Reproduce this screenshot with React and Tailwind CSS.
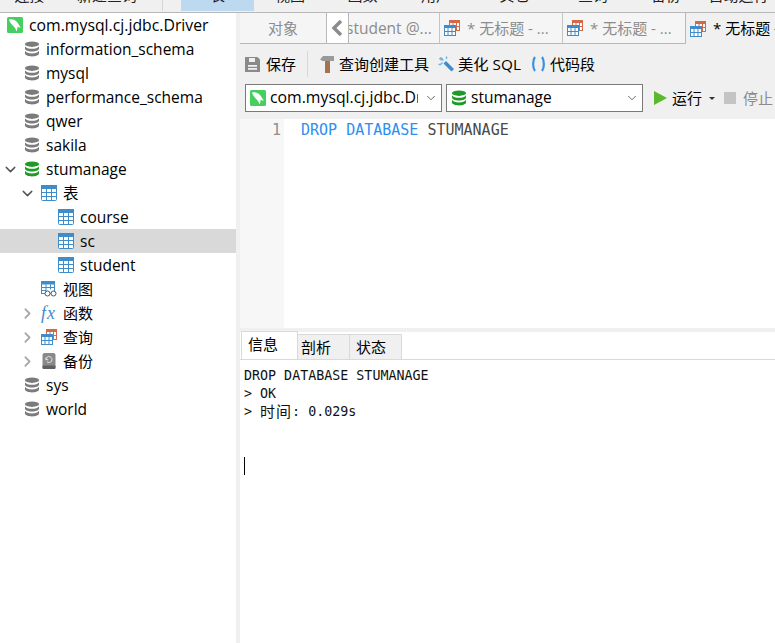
import { ChevronDown, ChevronRight } from 'lucide-react';

const uiFont = 'font-["Open_Sans","Noto_Sans_CJK_SC",sans-serif]';
const monoFont = 'font-["DejaVu_Sans_Mono","Noto_Sans_CJK_SC",monospace]';

const menuItems = [
    { label: '连接', width: 'w-[59px]' },
    { label: '新建查询', width: 'w-[96px]' },
    { label: '', width: 'w-[8px] border-r border-[#d4d4d4]' },
    { label: '', width: 'w-[18px]' },
    { label: '表', width: 'w-[73px] bg-[#bcd9f0]' },
    { label: '视图', width: 'w-[72px]' },
    { label: '函数', width: 'w-[73px]' },
    { label: '用户', width: 'w-[74px]' },
    { label: '其它', width: 'w-[83px]' },
    { label: '查询', width: 'w-[74px]' },
    { label: '备份', width: 'w-[72px]' },
    { label: '自动运行', width: 'w-[73px]' },
];

const DbIcon = ({ color = '#7b7b7b', size = 16 }) => (
    <svg width={size} height={size} viewBox="0 0 16 16" className="shrink-0">
        <ellipse cx="8" cy="3.2" rx="7" ry="2.7" fill={color} />
        <path d="M1 5.2c1 1.800 3.800 2.600 7 2.600s6-.8 7-2.600v2.600c0 1.600-3.100 2.700-7 2.700s-7-1.100-7-2.700z" fill={color} />
        <path d="M1 9.800c1 1.800 3.800 2.600 7 2.600s6-.8 7-2.600v2.800c0 1.600-3.100 2.900-7 2.900s-7-1.300-7-2.900z" fill={color} />
    </svg>
);

const Dolphin = () => (
    <svg width="16" height="16" viewBox="0 0 16 16" className="shrink-0">
        <rect width="16" height="16" rx="1.500" fill="#45cf5f" />
        <path d="M2 2.500c3-.8 6 .2 8 2.500 1.400 1.600 2 3.500 3.800 5.500-1.500.2-2.500-.3-3.300-1 .2 1.500-.2 3.500-1 5-.4-1.500-1-3-2.300-4.500C5.500 8.300 3 6 2 2.500z" fill="#fff" />
    </svg>
);

const TableIcon = ({ size = 16 }) => (
    <svg width={size} height={size} viewBox="0 0 16 16" className="shrink-0">
        <rect x="0.500" y="0.500" width="15" height="15" rx="1" fill="#fff" stroke="#3f8ccb" />
        <rect x="0" y="0" width="16" height="4" fill="#3f8ccb" />
        <path d="M5.500 4v11M10.500 4v11M1 7.500h14M1 11.500h14" stroke="#3f8ccb" strokeWidth="1" fill="none" />
    </svg>
);

const ViewIcon = () => (
    <svg width="16" height="16" viewBox="0 0 16 16" className="shrink-0">
        <rect x="0.500" y="0.500" width="13" height="12" fill="#fff" stroke="#3f8ccb" />
        <rect x="0" y="0" width="14" height="3.500" fill="#3f8ccb" />
        <path d="M5 3.500v9M9.500 3.500v5M1 6.500h12M1 9.500h4" stroke="#3f8ccb" fill="none" />
        <circle cx="6.500" cy="12.500" r="2.500" fill="#fff" stroke="#555" />
        <circle cx="12.500" cy="12.500" r="2.500" fill="#fff" stroke="#555" />
    </svg>
);

const QueryIcon = () => (
    <svg width="16" height="16" viewBox="0 0 16 16" className="shrink-0">
        <rect x="5.500" y="0.500" width="10" height="10" fill="#fff" stroke="#d4694a" />
        <rect x="5" y="0" width="11" height="3" fill="#d4694a" />
        <path d="M9 3v8M12.500 3v8M5 6.500h11" stroke="#d4694a" fill="none" />
        <rect x="0.500" y="5.500" width="11" height="10" fill="#fff" stroke="#3f8ccb" />
        <rect x="0" y="5" width="12" height="3" fill="#3f8ccb" />
        <path d="M4 8v8M8 8v8M0 11.500h12" stroke="#3f8ccb" fill="none" />
    </svg>
);

const BackupIcon = () => (
    <svg width="16" height="16" viewBox="0 0 16 16" className="shrink-0">
        <rect x="1.500" y="0" width="13" height="16" rx="2" fill="#8a8a8a" />
        <rect x="1.500" y="12.500" width="13" height="3.500" rx="1" fill="#5f5f5f" />
        <path d="M5 6.500a3 3 0 1 1 1 2.300M5 4.500v2.200h2.200" stroke="#e6e6e6" strokeWidth="1" fill="none" />
    </svg>
);

const FxIcon = () => (
    <span className='flex w-4 shrink-0 items-center font-["Liberation_Serif",serif] text-[18px] leading-none tracking-[1px] whitespace-nowrap text-[#3f8ccb] italic'>
        fx
    </span>
);

const SaveIcon = () => (
    <svg width="16" height="16" viewBox="0 0 16 16" className="shrink-0">
        <path d="M0 1h12.500L15 3.500V16H0z" fill="#8a8a8a" />
        <rect x="4" y="2" width="6" height="4" fill="#f0f0f0" />
        <rect x="3" y="9" width="9" height="1.800" fill="#f0f0f0" />
        <rect x="3" y="12" width="9" height="1.800" fill="#f0f0f0" />
    </svg>
);

const HammerIcon = () => (
    <svg width="14" height="17" viewBox="0 0 14 17" className="shrink-0">
        <path d="M0 3.500 3 0h11v5H2.500z" fill="#999" />
        <rect x="5" y="5" width="5" height="12" fill="#a5714f" />
    </svg>
);

const WandIcon = () => (
    <svg width="16" height="16" viewBox="0 0 16 16" className="shrink-0">
        <path d="m5.500 7.500 2.500-2.500 8 8-2.500 2.500z" fill="#3f8ccb" />
        <path d="M3 1v3.500M1.200 2.700h3.600M8.500 .5v2.500M.5 8.500h2.500M5.500 4.500 4 3M4.500 6.500 2.500 8.500" stroke="#6fb3e3" strokeWidth="1.400" fill="none" />
    </svg>
);

const BracesIcon = () => (
    <svg width="15" height="16" viewBox="0 0 15 16" className="shrink-0">
        <path d="M4 1C1.500 4 1.500 12 4 15M11 1c2.500 3 2.500 11 0 14" stroke="#3a8fe0" strokeWidth="2.200" fill="none" />
    </svg>
);

const PlayIcon = () => (
    <svg width="13" height="14" viewBox="0 0 13 14" className="shrink-0">
        <path d="M0 0 13 7 0 14z" fill="#5cb82c" />
    </svg>
);

const TreeRow = ({ indent, chevron, icon, label, selected, size = 'text-[15.5px]' }) => (
    <div className={`flex h-6 items-center ${indent} ${selected ? 'bg-[#d9d9d9]' : ''}`}>
        {chevron === 'open' && <ChevronDown size={17} strokeWidth={2} className="mr-[5px] -ml-[3px] shrink-0 text-[#555]" />}
        {chevron === 'closed' && <ChevronRight size={17} strokeWidth={2.5} className="mr-[5px] -ml-[3px] shrink-0 text-[#aaa]" />}
        {icon}
        <span className={`ml-[6px] leading-[24px] whitespace-nowrap text-black ${size}`}>{label}</span>
    </div>
);

const DocTab = ({ label }) => (
    <div className="flex h-full w-[123px] shrink-0 items-center gap-[7px] overflow-hidden border-l border-[#c4c4c4] pl-[4px]">
        <QueryIcon />
        <span className="text-[15px] whitespace-nowrap text-[#8c8c8c]">{label}</span>
    </div>
);

const App = () => {
    return (
        <div className={`flex h-[643px] w-[775px] flex-col overflow-hidden bg-white ${uiFont}`}>
            {/* menu strip, mostly scrolled out of the window */}
            <div className="flex h-[13px] shrink-0 overflow-hidden border-b border-[#b8b8b8] bg-[#f0f0f0]">
                {menuItems.map((item, i) => (
                    <div key={i} className={`flex h-[11px] shrink-0 items-start justify-center overflow-hidden ${item.width}`}>
                        <span className="-mt-[15px] text-[15px] leading-5 whitespace-nowrap text-[#222]">{item.label}</span>
                    </div>
                ))}
            </div>

            <div className="flex min-h-0 flex-1">
                {/* connection tree */}
                <div className="w-[236px] shrink-0 bg-white">
                    <TreeRow indent="pl-[7px]" size="text-[15.8px]" icon={<Dolphin />} label="com.mysql.cj.jdbc.Driver" />
                    <TreeRow indent="pl-[24px]" icon={<DbIcon />} label="information_schema" />
                    <TreeRow indent="pl-[24px]" icon={<DbIcon />} label="mysql" />
                    <TreeRow indent="pl-[24px]" icon={<DbIcon />} label="performance_schema" />
                    <TreeRow indent="pl-[24px]" icon={<DbIcon />} label="qwer" />
                    <TreeRow indent="pl-[24px]" icon={<DbIcon />} label="sakila" />
                    <TreeRow indent="pl-[5px]" chevron="open" icon={<DbIcon color="#1f9a28" />} label="stumanage" />
                    <TreeRow indent="pl-[22px]" chevron="open" icon={<TableIcon />} label="表" />
                    <TreeRow indent="pl-[58px]" icon={<TableIcon />} label="course" />
                    <TreeRow indent="pl-[58px]" selected icon={<TableIcon />} label="sc" />
                    <TreeRow indent="pl-[58px]" icon={<TableIcon />} label="student" />
                    <TreeRow indent="pl-[41px]" size="text-[15px]" icon={<ViewIcon />} label="视图" />
                    <TreeRow indent="pl-[22px]" size="text-[15px]" chevron="closed" icon={<FxIcon />} label="函数" />
                    <TreeRow indent="pl-[22px]" size="text-[15px]" chevron="closed" icon={<QueryIcon />} label="查询" />
                    <TreeRow indent="pl-[22px]" size="text-[15px]" chevron="closed" icon={<BackupIcon />} label="备份" />
                    <TreeRow indent="pl-[24px]" icon={<DbIcon />} label="sys" />
                    <TreeRow indent="pl-[24px]" icon={<DbIcon />} label="world" />
                </div>

                <div className="w-1 shrink-0 bg-[#f0f0f0]" />

                <div className="flex min-w-0 flex-1 flex-col">
                    {/* document tabs */}
                    <div className="flex h-[31px] shrink-0 items-stretch border-b border-[#b8b8b8] bg-[#f5f5f5]">
                        <div className="flex w-[87px] shrink-0 items-center justify-center border-r border-[#b8b8b8] text-[15px] text-[#8c8c8c]">对象</div>
                        <div className="flex w-[22px] shrink-0 items-center justify-center border-r border-[#b8b8b8] bg-white">
                            <svg width="11" height="16" viewBox="0 0 11 16"><path d="M9 1 2 8l7 7" stroke="#8c8c8c" strokeWidth="3.500" fill="none" /></svg>
                        </div>
                        <div className="flex w-[90px] shrink-0 items-center overflow-hidden text-[15.5px] leading-[30px] whitespace-nowrap text-[#8c8c8c]">
                            <span className="-ml-[3px]">student @...</span>
                        </div>
                        <DocTab label="* 无标题 - ..." />
                        <DocTab label="* 无标题 - ..." />
                        <div className="-mb-px flex flex-1 items-center gap-[7px] overflow-hidden border-l border-[#b8b8b8] bg-[#f0f0f0] pl-[4px]">
                            <QueryIcon />
                            <span className="text-[15px] whitespace-nowrap text-black">* 无标题 - ...</span>
                        </div>
                    </div>

                    {/* query toolbar */}
                    <div className="flex h-[40px] shrink-0 items-center bg-[#f0f0f0] pl-[5px] text-[15px] text-black">
                        <SaveIcon />
                        <span className="ml-[5px]">保存</span>
                        <div className="mr-[12px] ml-[11px] h-[26px] w-px bg-[#d8d8d8]" />
                        <HammerIcon />
                        <span className="ml-[5px]">查询创建工具</span>
                        <span className="ml-[9px]"><WandIcon /></span>
                        <span className="ml-[4px] text-[15.3px]">美化 SQL</span>
                        <span className="ml-[10px]"><BracesIcon /></span>
                        <span className="ml-[4px]">代码段</span>
                    </div>

                    <div className="flex h-[35px] shrink-0 items-start bg-[#f0f0f0] pl-[5px] text-[15.5px]">
                        <div className="flex h-[28px] w-[197px] shrink-0 items-center border border-[#7a7a7a] bg-white pl-[4px]">
                            <Dolphin />
                            <span className="ml-[4px] w-[148px] overflow-hidden text-[15.8px] whitespace-nowrap text-black">com.mysql.cj.jdbc.Driver</span>
                            <ChevronDown size={14} strokeWidth={1.5} className="ml-[6px] shrink-0 text-[#555]" />
                        </div>
                        <div className="ml-[4px] flex h-[28px] w-[197px] shrink-0 items-center border border-[#7a7a7a] bg-white pl-[4px]">
                            <DbIcon color="#1f9a28" />
                            <span className="ml-[4px] flex-1 text-black">stumanage</span>
                            <ChevronDown size={14} strokeWidth={1.5} className="mr-[3px] shrink-0 text-[#555]" />
                        </div>
                        <div className="flex h-[28px] items-center text-[15px]">
                            <span className="ml-[11px]"><PlayIcon /></span>
                            <span className="ml-[5px] text-black">运行</span>
                            <div className="mt-px ml-[7px] h-0 w-0 border-x-[3px] border-t-[3px] border-x-transparent border-t-[#333]" />
                            <div className="ml-[9px] h-3 w-3 bg-[#c4c4c4]" />
                            <span className="ml-[7px] text-[#8c8c8c]">停止</span>
                        </div>
                    </div>

                    {/* sql editor */}
                    <div className={`flex h-[209px] shrink-0 bg-white ${monoFont}`}>
                        <div className="w-[44px] shrink-0 bg-[#f7f7f7] pt-[1px] pr-[3px] text-right text-[15px] leading-5 text-[#8f8f8f]">1</div>
                        <div className="pt-[1px] pl-[17px] text-[15px] leading-5 whitespace-pre text-[#4a4a4a]">
                            <span className="text-[#2e8ff0]">DROP DATABASE</span> STUMANAGE
                        </div>
                    </div>

                    <div className="h-1 shrink-0 bg-[#f0f0f0]" />

                    {/* result tabs */}
                    <div className="flex h-[28px] shrink-0 items-end border-b border-[#d9d9d9] text-[15px] text-black">
                        <div className="ml-px flex h-[28px] w-[57px] shrink-0 items-center border-x border-t border-[#d9d9d9] bg-white pb-[2px] pl-[6px]">信息</div>
                        <div className="flex h-[25px] w-[52px] shrink-0 items-center border-t border-r border-[#d9d9d9] bg-[#f0f0f0] pl-[3px]">剖析</div>
                        <div className="flex h-[25px] w-[52px] shrink-0 items-center border-t border-r border-[#d9d9d9] bg-[#f0f0f0] pl-[6px]">状态</div>
                    </div>

                    {/* message output */}
                    <div className={`min-h-0 flex-1 bg-white pt-[7px] pl-[4px] text-[13.33px] leading-[18px] text-[#111] ${monoFont}`}>
                        <div>DROP DATABASE STUMANAGE</div>
                        <div>&gt; OK</div>
                        <div className="flex h-[18px] items-center whitespace-pre">
                            &gt; <span className="text-[15px] leading-[18px] tracking-[1px]">时间</span>: 0.029s
                        </div>
                        <div className="mt-[36px] h-[18px] w-px bg-black" />
                    </div>
                </div>
            </div>
        </div>
    );
};

export default App;
